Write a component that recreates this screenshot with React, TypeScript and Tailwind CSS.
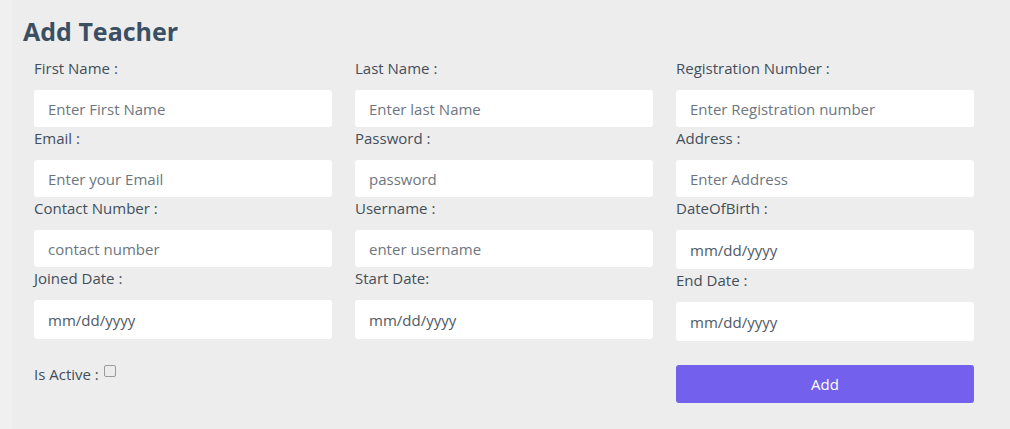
import React from "react";

type Field = {
  label: string;
  placeholder: string;
  date?: boolean;
  type?: string;
};

const columns: Field[][] = [
  [
    { label: "First Name :", placeholder: "Enter First Name" },
    { label: "Email :", placeholder: "Enter your Email", type: "email" },
    { label: "Contact Number :", placeholder: "contact number" },
    { label: "Joined Date :", placeholder: "mm/dd/yyyy", date: true },
  ],
  [
    { label: "Last Name :", placeholder: "Enter last Name" },
    { label: "Password :", placeholder: "password", type: "password" },
    { label: "Username :", placeholder: "enter username" },
    { label: "Start Date:", placeholder: "mm/dd/yyyy", date: true },
  ],
  [
    { label: "Registration Number :", placeholder: "Enter Registration number" },
    { label: "Address :", placeholder: "Enter Address" },
    { label: "DateOfBirth :", placeholder: "mm/dd/yyyy", date: true },
    { label: "End Date :", placeholder: "mm/dd/yyyy", date: true },
  ],
];

function FormField({ field }: { field: Field }) {
  return (
    <div className="flex flex-col">
      <label className="mb-[11px] text-[15px] leading-[22px] text-[#434f5b]">{field.label}</label>
      <input
        type={field.date ? "text" : field.type ?? "text"}
        placeholder={field.placeholder}
        className={
          "w-full rounded-[3px] bg-white px-[14px] text-[15px] text-[#495057] outline-none " +
          (field.date
            ? "h-[39px] placeholder:text-[#4f5a66]"
            : "h-[37px] placeholder:text-[#6d7680]")
        }
      />
    </div>
  );
}

export default function App() {
  return (
    <div
      className="flex h-[429px] w-[1010px] bg-[#ededed]"
      style={{ fontFamily: "'Open Sans', Lato, sans-serif" }}
    >
      <div className="w-[12px] shrink-0 bg-[#f0f0f0]" />
      <main className="flex-1 pt-[16px]">
        <h2 className="ml-[11px] text-[25px] font-bold leading-[31px] text-[#3b4f63]">Add Teacher</h2>
        <div className="mt-[10px] ml-[22px] grid w-[940px] grid-cols-3 gap-x-[23px]">
          {columns.map((col, ci) => (
            <div key={ci} className="flex flex-col">
              {col.map((f) => (
                <FormField key={f.label} field={f} />
              ))}
              {ci === 0 && (
                <div className="mt-[24px] flex items-start text-[15px] leading-[22px] text-[#434f5b]">
                  <span>Is Active :</span>
                  <input
                    type="checkbox"
                    className="ml-[5px] mt-[2px] h-[12px] w-[12px] appearance-none rounded-[2px] border border-[#9a9a9a] bg-[#ececec]"
                  />
                </div>
              )}
              {ci === 2 && (
                <button
                  type="button"
                  className="mt-[24px] h-[38px] w-full rounded-[3px] bg-[#7360ed] text-[15px] text-white"
                >
                  Add
                </button>
              )}
            </div>
          ))}
        </div>
      </main>
    </div>
  );
}
